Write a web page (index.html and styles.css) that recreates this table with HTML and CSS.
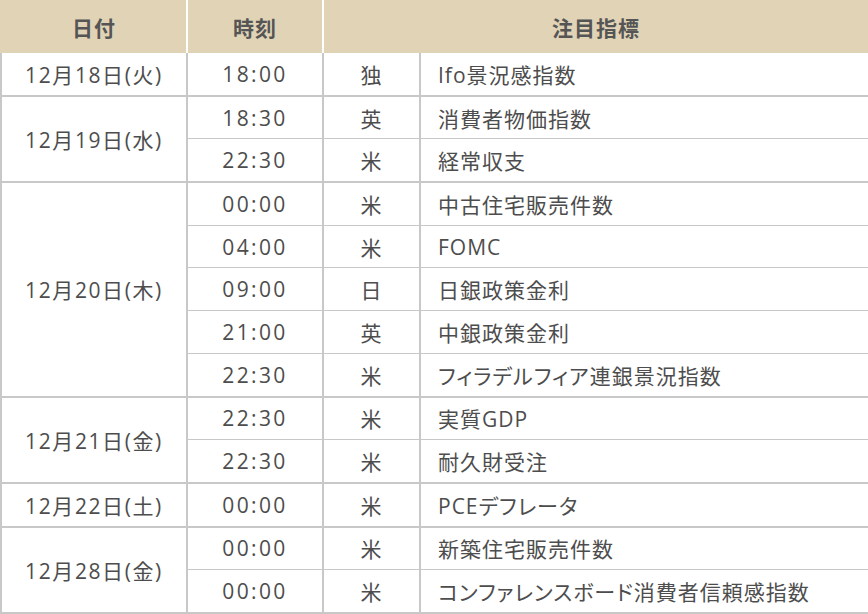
FILE: index.html
```html
<!DOCTYPE html>
<html lang="ja">
<head>
<meta charset="utf-8">
<link rel="stylesheet" href="styles.css">
</head>
<body>
<table class="schedule">
  <colgroup>
    <col class="c-date"><col class="c-time"><col class="c-country"><col class="c-name">
  </colgroup>
  <thead>
    <tr><th>日付</th><th>時刻</th><th colspan="2">注目指標</th></tr>
  </thead>
  <tbody>
    <tr><td class="date">12月18日(火)</td><td class="time">18:00</td><td class="country">独</td><td class="name">Ifo景況感指数</td></tr>
  </tbody>
  <tbody>
    <tr><td class="date" rowspan="2">12月19日(水)</td><td class="time">18:30</td><td class="country">英</td><td class="name">消費者物価指数</td></tr>
    <tr><td class="time">22:30</td><td class="country">米</td><td class="name">経常収支</td></tr>
  </tbody>
  <tbody>
    <tr><td class="date" rowspan="5">12月20日(木)</td><td class="time">00:00</td><td class="country">米</td><td class="name">中古住宅販売件数</td></tr>
    <tr><td class="time">04:00</td><td class="country">米</td><td class="name">FOMC</td></tr>
    <tr><td class="time">09:00</td><td class="country">日</td><td class="name">日銀政策金利</td></tr>
    <tr><td class="time">21:00</td><td class="country">英</td><td class="name">中銀政策金利</td></tr>
    <tr><td class="time">22:30</td><td class="country">米</td><td class="name">フィラデルフィア連銀景況指数</td></tr>
  </tbody>
  <tbody>
    <tr><td class="date" rowspan="2">12月21日(金)</td><td class="time">22:30</td><td class="country">米</td><td class="name">実質GDP</td></tr>
    <tr><td class="time">22:30</td><td class="country">米</td><td class="name">耐久財受注</td></tr>
  </tbody>
  <tbody>
    <tr><td class="date">12月22日(土)</td><td class="time">00:00</td><td class="country">米</td><td class="name">PCEデフレータ</td></tr>
  </tbody>
  <tbody>
    <tr><td class="date" rowspan="2">12月28日(金)</td><td class="time">00:00</td><td class="country">米</td><td class="name">新築住宅販売件数</td></tr>
    <tr><td class="time">00:00</td><td class="country">米</td><td class="name">コンファレンスボード消費者信頼感指数</td></tr>
  </tbody>
</table>
</body>
</html>
```

FILE: styles.css
```css
html, body {
  margin: 0;
  padding: 0;
  background: #fff;
}

.schedule {
  width: 868px;
  border-collapse: collapse;
  table-layout: fixed;
  font-family: "Open Sans", "Noto Sans CJK JP", sans-serif;
  font-feature-settings: "palt";
  color: #4d4d4d;
  border-bottom: 2px solid #c8c8c8;
}

.c-date { width: 186px; }
.c-time { width: 136px; }
.c-country { width: 97px; }
.c-name { width: 449px; }

.schedule th {
  height: 53px;
  padding: 0;
  background: #e0d3b6;
  color: #555;
  font-family: "Noto Sans CJK JP", sans-serif;
  font-size: 21px;
  font-weight: bold;
  letter-spacing: 1px;
  text-align: center;
  border-left: 2px solid #fff;
  border-right: 2px solid #fff;
  border-bottom: none;
}

.schedule th:first-child { border-left-color: #e0d3b6; }
.schedule th:last-child { border-right-color: #e0d3b6; }

.schedule td {
  height: 41.7px;
  padding: 0;
  font-size: 21px;
  letter-spacing: 1px;
  text-align: center;
  border-top: 1px solid #c8c8c8;
  border-left: 2px solid #c8c8c8;
  border-right: 2px solid #c8c8c8;
}

.schedule tbody + tbody tr:first-child td {
  border-top: 2px solid #c8c8c8;
}

.schedule thead + tbody tr:first-child td {
  border-top: none;
}

.schedule td.date {
  letter-spacing: 1.6px;
}

.schedule td.time {
  letter-spacing: 2.4px;
}

.schedule td.name {
  text-align: left;
  padding-left: 17px;
}
```
